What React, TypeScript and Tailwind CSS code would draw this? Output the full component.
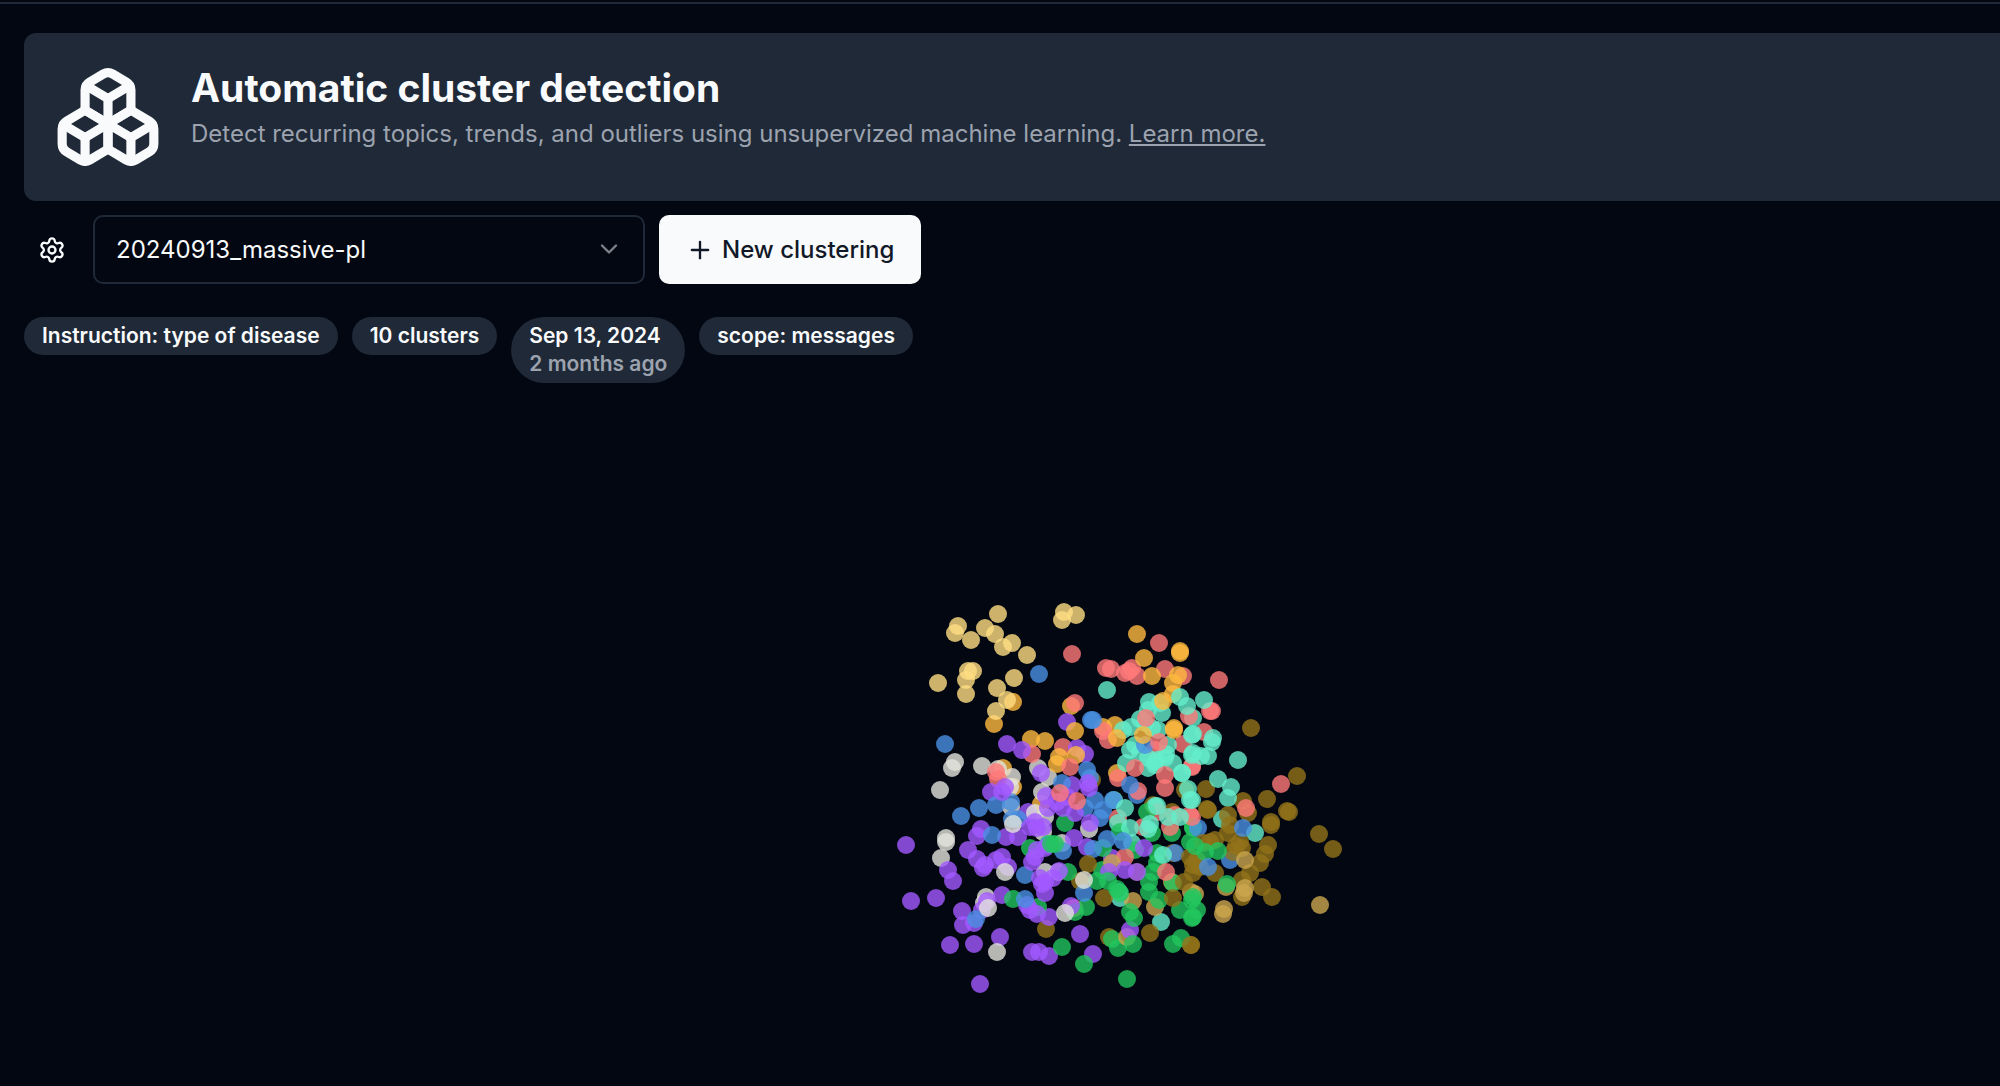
import React from 'react';
import { Boxes, ChevronDown, Plus, Settings } from 'lucide-react';

type Topic =
  | 'yellow'
  | 'orange'
  | 'red'
  | 'teal'
  | 'blue'
  | 'purple'
  | 'white'
  | 'green'
  | 'brown'
  | 'tan';

const TOPIC_COLORS: Record<Topic, string> = {
  yellow: '#ffdd82',
  orange: '#ffb940',
  red: '#ff7979',
  teal: '#64edcb',
  blue: '#4a90e2',
  purple: '#a259ff',
  white: '#e4e4dc',
  green: '#22c55e',
  brown: '#92731a',
  tan: '#cca64d',
};

// Batches are painted in order, each one is a list of "x,y" pairs
const BATCHES: [Topic, string][] = [
  ['brown', '1251,728 1297,776 1206,789 1243,801 1248,813 1267,799 1287,811 1289,812 1271,822 1271,825 1319,834 1333,849 1268,845 1265,854 1260,863 1250,873 1242,880 1262,887 1272,897 1242,897 1185,790 1092,780 1153,805 1172,812 1173,853 1137,872 1080,881 1109,937 1046,929 1191,945'],
  ['orange', '1013,702 994,724 1071,706 1103,727 1115,725 1003,768 1013,787 1117,773 1137,634 1031,739 1045,741 1041,804'],
  ['white', '955,762 952,768 940,790 982,766 998,769 1012,777 1010,787 1038,768 1048,777 1042,792 946,838 946,842 941,858 986,897 984,903 1045,872 1058,872 1062,843 1089,829 1043,832 1011,807'],
  ['red', '1072,654 1159,643 1165,669 1106,668 1111,669 1125,673 1132,668 1137,676 1129,671 1183,676 1219,680 1212,711 1210,711 1075,703 1032,754 998,779 1204,732 1183,744 1192,766 1281,784 1063,747 1103,731 1108,740 1118,778 1155,750 1192,767 1190,815 1074,908 1165,788 1118,818'],
  ['teal', '1107,690 1149,702 1160,703 1148,710 1162,713 1140,719 1193,718 1204,700 1238,760 1213,738 1212,742 1192,755 1201,756 1208,756 1218,779 1231,787 1228,798 1190,800 1222,819 1255,833 1182,773 1145,723 1123,730 1131,727 1152,728 1158,730 1135,745 1130,750 1140,753 1126,763 1148,768 1157,760 1155,765 1173,763 1168,745 1166,754 1148,758 1114,800 1118,823 1155,806 1132,843 1119,892 1120,898 1161,922'],
  ['purple', '1067,722 1077,748 1085,754 1007,744 1022,750 1072,785 991,792 906,845 981,829 977,836 1006,837 1018,837 1028,812 1074,838 968,850 911,901 936,898 962,911 963,925 974,923 950,945 974,944 1000,937 1032,952 1039,952 1049,956 980,984 1080,934 1093,954 948,870 953,881 982,910 1049,917 1087,847 1112,858 1002,895'],
  ['green', '1065,823 1030,848 1048,844 1013,899 1038,907 1068,872 1103,848 1120,832 1135,850 1152,833 1172,833 1157,853 1193,827 1190,842 1193,828 1086,907 1075,912 1062,947 1084,964 1127,979 1112,939 1118,948 1149,892 1149,882 1153,872 1157,863 1102,870'],
  ['blue', '1039,674 1093,720 1091,720 945,744 961,816 979,808 996,805 992,835 1012,819 1018,819 1011,802 1062,783 1087,770 1090,778 1145,745 1137,795 1095,800 1085,808 1103,810 1100,818 1113,800 1084,893 1198,828 1230,860 1175,853 1048,845'],
  ['yellow', '998,614 958,626 955,633 985,628 995,634 971,640 1003,647 1012,643 1027,655 938,683 968,671 973,671 966,680 966,694 1014,678 997,688 996,711 1007,700 1064,612 1076,615 1062,620'],
  ['orange', '1180,651 1180,653 1144,658 1152,676 1178,675 1173,683 1173,694 1163,701 1075,731 1059,757 1076,755 1057,764 1117,738'],
  ['white', '1013,824 1035,813 1045,817'],
  ['purple', '1088,783 1089,788 1041,773 1046,796 1005,787 1002,792 1057,802 1063,808 1067,797 1075,813 1048,808 1030,827 1037,828 1043,827 1035,822 1090,823 1037,850 1045,848 1144,848'],
  ['red', '996,772 1070,767 1060,793 1077,801 1146,718 1189,716 1138,791 1143,827 1170,827 1192,817 1158,812 1175,815 1246,808'],
  ['green', '1147,812'],
  ['teal', '1180,697 1187,706 1193,734 1192,735 1193,753 1182,773 1188,789 1192,800 1125,808 1150,824 1148,829 1168,817 1180,817 1130,828 1163,855 1155,762 1165,758 1157,806'],
  ['orange', '1143,735 1174,728 1174,730'],
  ['red', '1159,742 1125,857 1135,768 1165,775'],
  ['blue', '1130,785 1093,849 1107,839 1123,841 1063,851 976,919 1025,875'],
  ['brown', '1208,810 1207,809 1228,815 1230,825 1228,833 1240,842 1242,848 1233,852 1236,846 1215,840 1210,842 1203,843 1197,860 1200,867 1193,865 1193,873 1190,857 1215,873 1088,864 1104,898 1150,933'],
  ['tan', '1320,905 1245,860 1245,888 1244,893 1223,914 1224,909 1226,887 1195,894 1191,892 1112,863 1133,901 1155,907 1127,937 1172,882'],
  ['purple', '977,859 985,865 983,868 1002,857 996,860 1008,867 1032,862 1035,857 1040,878 1045,882 1042,884 1045,893 1059,871 1053,878 987,901 1071,906 1109,872 1125,870 1137,872 1027,905 1030,910 1037,914 1130,930'],
  ['green', '1055,844 1051,844 1205,852 1218,851 1227,884 1195,846 1193,897 1197,910 1193,917 1180,910 1192,918 1192,900 1159,900 1173,883 1097,881 1108,881 1120,893 1117,889 1130,912 1134,918 1133,944 1173,944 1181,938'],
  ['brown', '1184,882 1173,898 1191,945'],
  ['blue', '1243,828 1208,867 1025,899'],
  ['red', '1166,872'],
  ['white', '1005,872 988,908 1065,913 1084,880 997,952'],
];

const POINTS = BATCHES.flatMap(([topic, pairs]) =>
  pairs.split(' ').map((pair) => {
    const [x, y] = pair.split(',').map(Number);
    return { x, y, color: TOPIC_COLORS[topic] };
  })
);

const Badge: React.FC<{ children: React.ReactNode }> = ({ children }) => (
  <div className="rounded-[33px] bg-[#1f2937] px-[18px] py-[5px] text-[21px] leading-7 font-semibold">
    {children}
  </div>
);

const ClusterPlot: React.FC = () => (
  <svg viewBox="24 383 1976 700" className="block w-full" role="img" aria-label="Clusters">
    {POINTS.map((point, i) => (
      <circle key={i} cx={point.x} cy={point.y} r={9} fill={point.color} fillOpacity={0.8} />
    ))}
  </svg>
);

const App: React.FC = () => {
  return (
    <div className="min-h-screen bg-[#030712] pt-0.5 font-[Inter,sans-serif] text-[#f9fafb]">
      <div className="h-0.5 bg-[#1f2937]" />
      <main className="pt-[29px] pl-6">
        <header className="flex gap-7 rounded-l-xl bg-[#1f2937] p-[29px]">
          <Boxes className="size-[110px] shrink-0" />
          <div className="pt-0.5">
            <h1 className="text-[39px] leading-[48px] font-bold">Automatic cluster detection</h1>
            <p className="mt-1 text-2xl leading-9 text-[#9ca3af]">
              Detect recurring topics, trends, and outliers using unsupervized machine learning.{' '}
              <a href="#learn-more" className="underline">
                Learn more.
              </a>
            </p>
          </div>
        </header>

        <div className="mt-3.5 flex items-center gap-3.5">
          <button type="button" aria-label="Settings" className="flex h-[69px] w-[55px] items-center justify-center">
            <Settings className="size-7" />
          </button>
          <div className="relative w-[552px]">
            <select
              aria-label="Clustering"
              className="block h-[69px] w-full appearance-none rounded-[10px] border-2 border-[#1f2937] bg-[#030712] px-[21px] text-2xl"
            >
              <option>20240913_massive-pl</option>
            </select>
            <ChevronDown className="pointer-events-none absolute top-5 right-[22px] size-7 opacity-50" />
          </div>
          <button
            type="button"
            className="flex h-[69px] items-center gap-2 rounded-[10px] bg-[#f9fafb] px-[27px] text-2xl font-medium text-[#111827]"
          >
            <Plus className="size-7" />
            New clustering
          </button>
        </div>

        <div className="mt-[33px] flex items-start gap-3.5">
          <Badge>Instruction: type of disease</Badge>
          <Badge>10 clusters</Badge>
          <Badge>
            <p>Sep 13, 2024</p>
            <p className="text-[#9ca3af]">2 months ago</p>
          </Badge>
          <Badge>scope: messages</Badge>
        </div>

        <ClusterPlot />
      </main>
    </div>
  );
};

export default App;
